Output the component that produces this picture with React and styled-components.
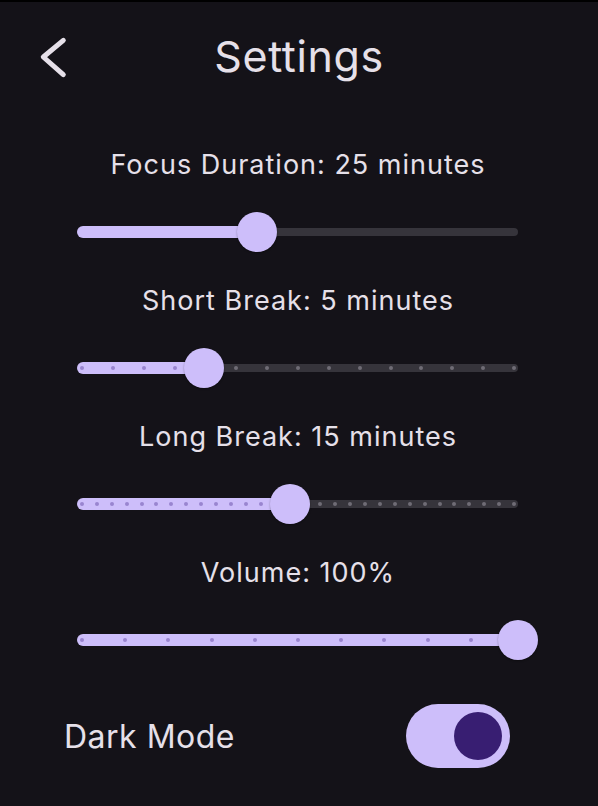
import React from "react";
import styled, { createGlobalStyle } from "styled-components";

const GlobalStyle = createGlobalStyle`
  html, body {
    margin: 0;
    padding: 0;
    background: #141218;
  }
  * { box-sizing: border-box; }
`;

const Page = styled.div`
  width: 598px;
  min-height: 806px;
  background: #141218;
  border-top: 2px solid #000;
  padding-top: 27px;
  font-family: Inter, "Noto Sans", sans-serif;
  color: #e6e0e9;
  display: flex;
  flex-direction: column;
`;

const Header = styled.header`
  display: grid;
  grid-template-columns: 1fr auto 1fr;
  align-items: center;
  height: 48px;
`;

const BackButton = styled.button`
  width: 48px;
  height: 48px;
  margin-left: 30px;
  padding: 0;
  border: none;
  background: transparent;
  display: flex;
  cursor: pointer;
`;

const Title = styled.h1`
  margin: 3px 0 0;
  font-size: 43px;
  line-height: 48px;
  font-weight: 400;
  letter-spacing: 0.6px;
  color: #e6e0e9;
`;

const Settings = styled.section`
  display: flex;
  flex-direction: column;
  gap: 27px;
  padding: 0 80px 0 78px;
  margin-top: 70px;
`;

const Group = styled.div`
  display: flex;
  flex-direction: column;
  gap: 25px;
`;

const Label = styled.div`
  text-align: center;
  font-size: 27px;
  line-height: 36px;
  letter-spacing: 1px;
`;

const SliderRoot = styled.div`
  position: relative;
  height: 48px;
`;

const InactiveTrack = styled.div`
  position: absolute;
  left: 0;
  right: 0;
  top: 20px;
  height: 8px;
  border-radius: 4px;
  background: #36343b;
`;

const ActiveTrack = styled.div`
  position: absolute;
  left: -1px;
  top: 18px;
  height: 12px;
  border-radius: 6px 0 0 6px;
  background: #cdbefa;
`;

const Tick = styled.span`
  position: absolute;
  top: 22px;
  width: 4px;
  height: 4px;
  margin-left: -2px;
  border-radius: 50%;
  background: ${(p) => (p.$active ? "#9985cf" : "#6f6c75")};
`;

const Thumb = styled.div`
  position: absolute;
  top: 4px;
  width: 40px;
  height: 40px;
  margin-left: -20px;
  border-radius: 50%;
  background: #cdbefa;
  box-shadow: 0 1px 2px rgba(0, 0, 0, 0.35);
`;

const ToggleRow = styled.div`
  display: flex;
  align-items: center;
  justify-content: space-between;
  padding: 0 88px 0 64px;
  margin-top: 40px;
  height: 64px;
`;

const ToggleLabel = styled.span`
  font-size: 32px;
  line-height: 40px;
  letter-spacing: 0.5px;
  margin-top: 2px;
`;

const SwitchTrack = styled.div`
  width: 104px;
  height: 64px;
  border-radius: 32px;
  background: ${(p) => (p.$on ? "#cdbefa" : "#36343b")};
  display: flex;
  align-items: center;
  justify-content: ${(p) => (p.$on ? "flex-end" : "flex-start")};
  padding: 0 8px;
`;

const SwitchThumb = styled.div`
  width: 48px;
  height: 48px;
  border-radius: 50%;
  background: #381e72;
`;

function Slider({ value, min, max, divisions }) {
  const frac = (value - min) / (max - min);
  const ticks = [];
  if (divisions) {
    for (let k = 0; k <= divisions; k++) {
      const f = k / divisions;
      const active = f <= frac;
      const posPx = 4 + 432 * f;
      const thumbPx = 440 * frac;
      if (Math.abs(posPx - thumbPx) < 22) continue;
      ticks.push(
        <Tick
          key={k}
          $active={active}
          style={{ left: `calc(4px + (100% - 8px) * ${f})` }}
        />
      );
    }
  }
  return (
    <SliderRoot>
      <InactiveTrack />
      <ActiveTrack style={{ width: `calc(${frac * 100}% + 1px)` }} />
      {ticks}
      <Thumb style={{ left: `${frac * 100}%` }} />
    </SliderRoot>
  );
}

export default function App() {
  return (
    <>
      <GlobalStyle />
      <Page>
        <Header>
          <BackButton aria-label="Back">
            <svg width="48" height="48" viewBox="0 0 48 48">
              <polyline
                points="33.3,9.3 13.3,26 33.3,43.7"
                fill="none"
                stroke="#e6e0e9"
                strokeWidth="5"
                strokeLinecap="round"
                strokeLinejoin="round"
              />
            </svg>
          </BackButton>
          <Title>Settings</Title>
          <div />
        </Header>
        <Settings>
          <Group>
            <Label>Focus Duration: 25 minutes</Label>
            <Slider value={25} min={1} max={60} />
          </Group>
          <Group>
            <Label>Short Break: 5 minutes</Label>
            <Slider value={5} min={1} max={15} divisions={14} />
          </Group>
          <Group>
            <Label>Long Break: 15 minutes</Label>
            <Slider value={15} min={1} max={30} divisions={29} />
          </Group>
          <Group>
            <Label>Volume: 100%</Label>
            <Slider value={100} min={0} max={100} divisions={10} />
          </Group>
        </Settings>
        <ToggleRow>
          <ToggleLabel>Dark Mode</ToggleLabel>
          <SwitchTrack $on>
            <SwitchThumb />
          </SwitchTrack>
        </ToggleRow>
      </Page>
    </>
  );
}
